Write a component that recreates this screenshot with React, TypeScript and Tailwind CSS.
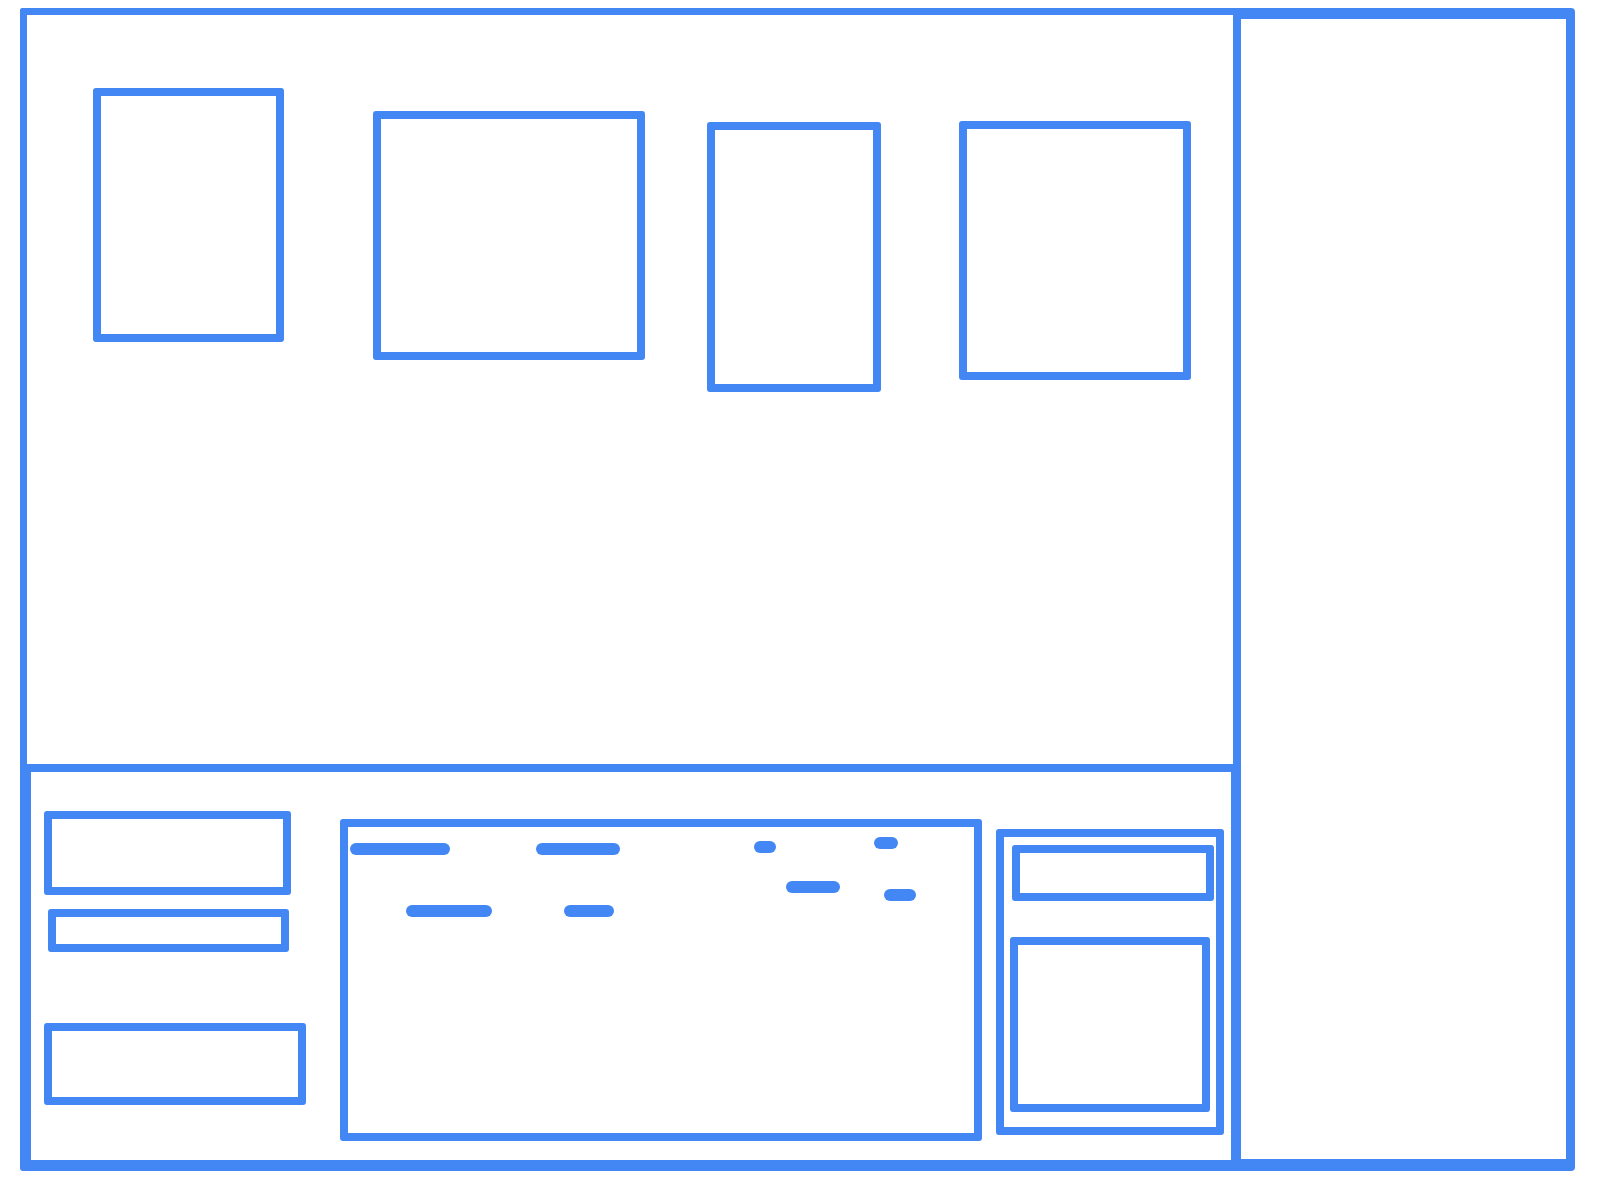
const line = "border-[#4387f5]";

// one framed placeholder box
const Frame = ({ className }: { className: string }) => (
  <div className={`shrink-0 rounded-[3px] border-[8px] ${line} ${className}`} />
);

// text placeholder bar
const Pill = ({ className }: { className: string }) => (
  <div className={`h-[12px] shrink-0 rounded-full bg-[#4387f5] ${className}`} />
);

const App = () => {
  return (
    <div className="min-h-[1199px] w-full bg-white pl-[20px] pt-[8px]">
      <div className="flex w-[1555px] h-[1163px]">
        {/* left column */}
        <div className="flex w-[1213px] flex-col">
          {/* top canvas */}
          <div
            className={`flex h-[756px] items-start rounded-tl-[3px] border-l-[7px] border-t-[7px] ${line}`}
          >
            <Frame className="ml-[66px] mt-[73px] h-[254px] w-[191px]" />
            <Frame className="ml-[89px] mt-[96px] h-[249px] w-[272px]" />
            <Frame className="ml-[62px] mt-[107px] h-[270px] w-[174px]" />
            <Frame className="ml-[78px] mt-[106px] h-[259px] w-[232px]" />
          </div>

          {/* bottom panel */}
          <div
            className={`flex h-[407px] items-start rounded-bl-[3px] border-b-[11px] border-l-[11px] border-r-[2px] border-t-[8px] ${line}`}
          >
            <div className="flex w-[275px] shrink-0 flex-col items-start">
              <Frame className="ml-[13px] mt-[39px] h-[84px] w-[247px]" />
              <Frame className="ml-[17px] mt-[14px] h-[43px] w-[241px]" />
              <Frame className="ml-[13px] mt-[71px] h-[82px] w-[262px]" />
            </div>

            {/* table-ish box */}
            <div
              className={`ml-[34px] mt-[47px] flex h-[322px] w-[642px] shrink-0 items-start rounded-[3px] border-[8px] ${line}`}
            >
              <div className="ml-[2px] flex w-[142px] flex-col items-start">
                <Pill className="mt-[16px] w-[100px]" />
                <Pill className="ml-[56px] mt-[50px] w-[86px]" />
              </div>
              <div className="ml-[44px] flex w-[84px] flex-col items-start">
                <Pill className="mt-[16px] w-[84px]" />
                <Pill className="ml-[28px] mt-[50px] w-[50px]" />
              </div>
              <div className="ml-[134px] flex w-[86px] flex-col items-start">
                <Pill className="mt-[14px] w-[22px]" />
                <Pill className="ml-[32px] mt-[28px] w-[54px]" />
              </div>
              <div className="ml-[34px] flex w-[42px] flex-col items-start">
                <Pill className="mt-[10px] w-[24px]" />
                <Pill className="ml-[10px] mt-[40px] w-[32px]" />
              </div>
            </div>

            {/* right card */}
            <div
              className={`ml-[14px] mt-[57px] flex h-[306px] w-[228px] shrink-0 flex-col items-start rounded-[3px] border-[8px] ${line}`}
            >
              <Frame className="ml-[8px] mt-[8px] h-[56px] w-[202px]" />
              <Frame className="ml-[6px] mt-[36px] h-[175px] w-[200px]" />
            </div>
          </div>
        </div>

        {/* right panel */}
        <div
          className={`h-[1163px] w-[342px] shrink-0 rounded-r-[4px] border-b-[12px] border-l-[8px] border-r-[9px] border-t-[11px] ${line}`}
        />
      </div>
    </div>
  );
};

export default App;
